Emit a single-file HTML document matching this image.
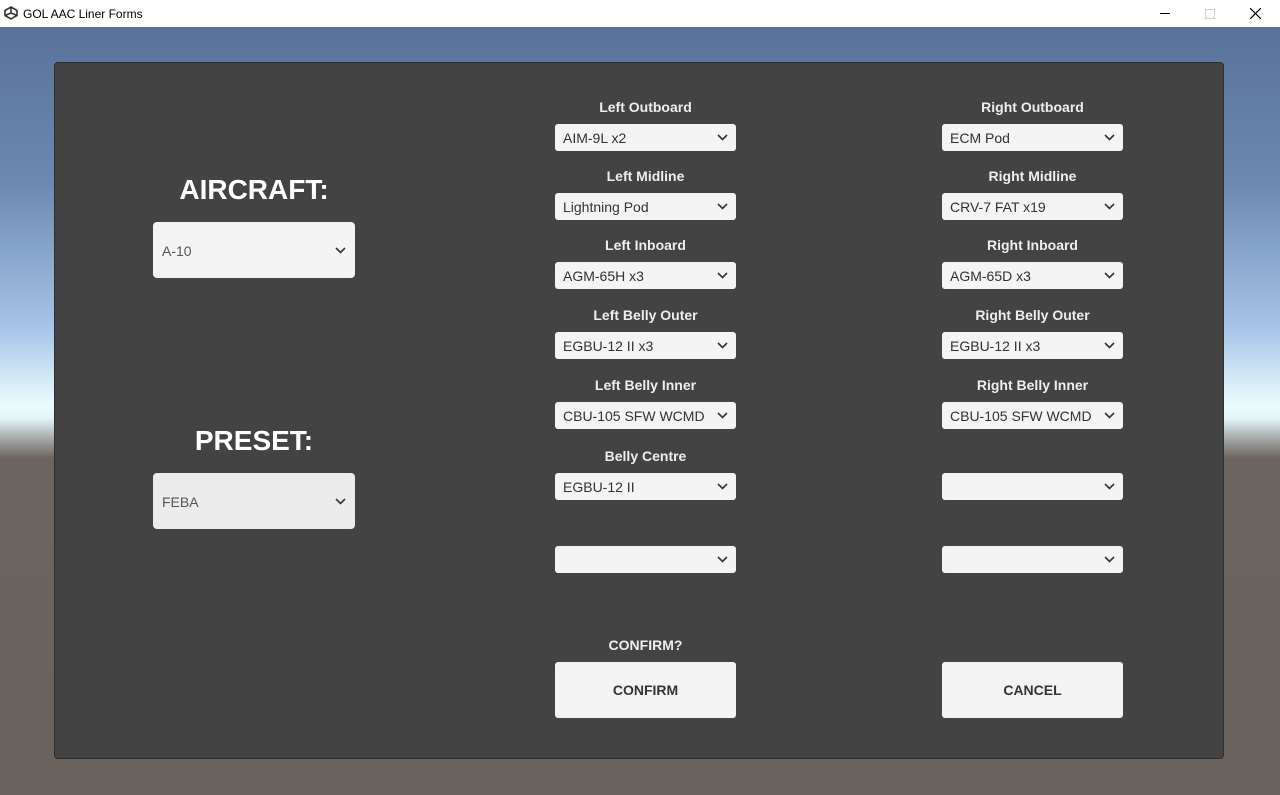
<!DOCTYPE html>
<html><head><meta charset="utf-8"><style>
*{margin:0;padding:0;box-sizing:border-box}
body{width:1280px;height:795px;overflow:hidden;position:relative;font-family:"Liberation Sans",Arial,sans-serif;
background:linear-gradient(to bottom,#5a7299 27px,#6a88b0 180px,#a7c6e8 330px,#eafcfe 405px,#e5f6f8 418px,#a0a4a4 440px,#6c655f 458px,#6a625c 795px);}
.title{position:absolute;left:0;top:0;width:1280px;height:27px;background:#fff;font-size:12px;color:#000}
.title span{position:absolute;left:23px;top:7px}
.panel{position:absolute;left:54px;top:62px;width:1170px;height:697px;background:#434343;border:1px solid #2e2e2e;border-radius:4px}
.lbl{position:absolute;width:181px;text-align:center;color:#eee;font-weight:bold;font-size:14px}
.dd{position:absolute;width:181px;height:27px;background:#f4f4f4;border-radius:3px;color:#323232;font-size:14px;padding:6px 0 0 8px}
.dd svg{position:absolute;right:8px;top:10px}
.big{position:absolute;color:#fff;font-weight:bold;font-size:28px;width:202px;text-align:center}
.bdd{position:absolute;left:153px;width:202px;height:56px;background:#f4f4f4;border-radius:4px;color:#555;font-size:14px;padding:21px 0 0 9px}
.bdd svg{position:absolute;right:9px;top:25px}
.btn{position:absolute;width:181px;height:56px;background:#f4f4f4;border-radius:3px;color:#333;font-weight:bold;font-size:14px;text-align:center;line-height:56px}
</style></head><body>
<div class="title">
<svg style="position:absolute;left:4px;top:6px" width="14" height="14" viewBox="0 0 14 14"><path d="M7 1L13 4.5V9.5L7 13L1 9.5V4.5Z M7 1V7L13 9.5 M7 7L1 9.5" fill="none" stroke="#333" stroke-width="1.6"/></svg>
<span>GOL AAC Liner Forms</span>
<div style="position:absolute;left:1160px;top:13px;width:10px;height:1px;background:#000"></div>
<div style="position:absolute;left:1205px;top:9px;width:10px;height:10px;border:1px solid #ccc"></div>
<svg style="position:absolute;left:1250px;top:8px" width="11" height="11"><path d="M0 0L11 11M11 0L0 11" stroke="#000" stroke-width="1.2"/></svg>
</div>
<div class="panel"></div>

<div class="big" style="left:153px;top:174px">AIRCRAFT:</div>
<div class="bdd" style="top:222px">A-10<svg width="11" height="7"><path d="M1 1L5.5 5.5L10 1" fill="none" stroke="#333" stroke-width="1.6"/></svg></div>
<div class="big" style="left:153px;top:425px">PRESET:</div>
<div class="bdd" style="top:473px;background:#ececec">FEBA<svg width="11" height="7"><path d="M1 1L5.5 5.5L10 1" fill="none" stroke="#333" stroke-width="1.6"/></svg></div>

<div class="lbl" style="left:555px;top:99px">Left Outboard</div>
<div class="dd" style="left:555px;top:124px">AIM-9L x2<svg width="11" height="7"><path d="M1 1L5.5 5.5L10 1" fill="none" stroke="#333" stroke-width="1.6"/></svg></div>
<div class="lbl" style="left:555px;top:168px">Left Midline</div>
<div class="dd" style="left:555px;top:193px">Lightning Pod<svg width="11" height="7"><path d="M1 1L5.5 5.5L10 1" fill="none" stroke="#333" stroke-width="1.6"/></svg></div>
<div class="lbl" style="left:555px;top:237px">Left Inboard</div>
<div class="dd" style="left:555px;top:262px">AGM-65H x3<svg width="11" height="7"><path d="M1 1L5.5 5.5L10 1" fill="none" stroke="#333" stroke-width="1.6"/></svg></div>
<div class="lbl" style="left:555px;top:307px">Left Belly Outer</div>
<div class="dd" style="left:555px;top:332px">EGBU-12 II x3<svg width="11" height="7"><path d="M1 1L5.5 5.5L10 1" fill="none" stroke="#333" stroke-width="1.6"/></svg></div>
<div class="lbl" style="left:555px;top:377px">Left Belly Inner</div>
<div class="dd" style="left:555px;top:402px">CBU-105 SFW WCMD<svg width="11" height="7"><path d="M1 1L5.5 5.5L10 1" fill="none" stroke="#333" stroke-width="1.6"/></svg></div>
<div class="lbl" style="left:555px;top:448px">Belly Centre</div>
<div class="dd" style="left:555px;top:473px">EGBU-12 II<svg width="11" height="7"><path d="M1 1L5.5 5.5L10 1" fill="none" stroke="#333" stroke-width="1.6"/></svg></div>
<div class="dd" style="left:555px;top:546px"><svg width="11" height="7"><path d="M1 1L5.5 5.5L10 1" fill="none" stroke="#333" stroke-width="1.6"/></svg></div>

<div class="lbl" style="left:942px;top:99px">Right Outboard</div>
<div class="dd" style="left:942px;top:124px">ECM Pod<svg width="11" height="7"><path d="M1 1L5.5 5.5L10 1" fill="none" stroke="#333" stroke-width="1.6"/></svg></div>
<div class="lbl" style="left:942px;top:168px">Right Midline</div>
<div class="dd" style="left:942px;top:193px">CRV-7 FAT x19<svg width="11" height="7"><path d="M1 1L5.5 5.5L10 1" fill="none" stroke="#333" stroke-width="1.6"/></svg></div>
<div class="lbl" style="left:942px;top:237px">Right Inboard</div>
<div class="dd" style="left:942px;top:262px">AGM-65D x3<svg width="11" height="7"><path d="M1 1L5.5 5.5L10 1" fill="none" stroke="#333" stroke-width="1.6"/></svg></div>
<div class="lbl" style="left:942px;top:307px">Right Belly Outer</div>
<div class="dd" style="left:942px;top:332px">EGBU-12 II x3<svg width="11" height="7"><path d="M1 1L5.5 5.5L10 1" fill="none" stroke="#333" stroke-width="1.6"/></svg></div>
<div class="lbl" style="left:942px;top:377px">Right Belly Inner</div>
<div class="dd" style="left:942px;top:402px">CBU-105 SFW WCMD<svg width="11" height="7"><path d="M1 1L5.5 5.5L10 1" fill="none" stroke="#333" stroke-width="1.6"/></svg></div>
<div class="dd" style="left:942px;top:473px"><svg width="11" height="7"><path d="M1 1L5.5 5.5L10 1" fill="none" stroke="#333" stroke-width="1.6"/></svg></div>
<div class="dd" style="left:942px;top:546px"><svg width="11" height="7"><path d="M1 1L5.5 5.5L10 1" fill="none" stroke="#333" stroke-width="1.6"/></svg></div>

<div class="lbl" style="left:555px;top:637px">CONFIRM?</div>
<div class="btn" style="left:555px;top:662px">CONFIRM</div>
<div class="btn" style="left:942px;top:662px">CANCEL</div>
</body></html>
